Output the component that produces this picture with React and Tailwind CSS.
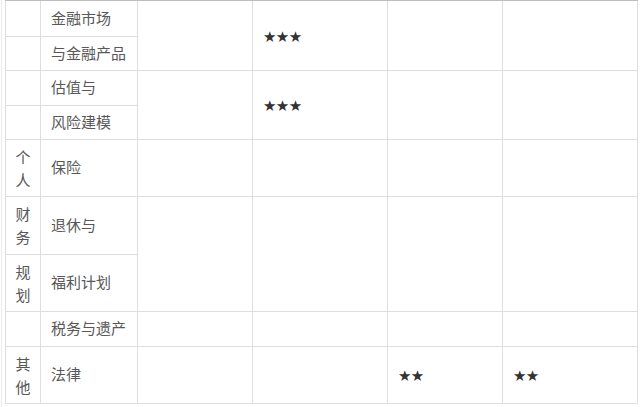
import React from "react";

const cjk = { fontFamily: '"Noto Sans CJK SC", "Liberation Sans", sans-serif' };

const Stars = ({ n }) => (
  <span
    className="text-[15px] text-[#333] tracking-[-0.6px]"
    style={{ fontFamily: '"DejaVu Sans", sans-serif' }}
  >
    {"★".repeat(n)}
  </span>
);

const Vert = ({ a, b }) => (
  <div className="flex flex-col items-center leading-[23px] text-[15px]">
    <span>{a}</span>
    <span>{b}</span>
  </div>
);

const td = "border border-[#dedede] align-middle p-0";
const label = "border border-[#dedede] align-middle pl-[10px] text-[15px]";
const star = "border border-[#dedede] align-middle pl-[10px]";

export default function App() {
  return (
    <div className="w-[644px] h-[407px] bg-white overflow-hidden relative" style={cjk}>
      <div className="absolute left-[1px] top-0 bottom-0 w-px bg-[#ececec]" />
      <div className="pl-[5px] pt-0">
        <div className="w-[633px] h-[1px] bg-[#bdbdbd]" />
        <table className="border-collapse table-fixed w-[633px] text-[#585858]">
          <colgroup>
            <col className="w-[35px]" />
            <col className="w-[97px]" />
            <col className="w-[115px]" />
            <col className="w-[135px]" />
            <col className="w-[115px]" />
            <col className="w-[135px]" />
          </colgroup>
          <tbody>
            <tr className="h-[35px]">
              <td className={td + " border-t-0"} />
              <td className={label + " border-t-0"}>金融市场</td>
              <td className={td + " border-t-0"} rowSpan={2} />
              <td className={star + " border-t-0"} rowSpan={2}><Stars n={3} /></td>
              <td className={td + " border-t-0"} rowSpan={2} />
              <td className={td + " border-t-0"} rowSpan={2} />
            </tr>
            <tr className="h-[34px]">
              <td className={td} />
              <td className={label}>与金融产品</td>
            </tr>
            <tr className="h-[35px]">
              <td className={td} />
              <td className={label}>估值与</td>
              <td className={td} rowSpan={2} />
              <td className={star} rowSpan={2}><Stars n={3} /></td>
              <td className={td} rowSpan={2} />
              <td className={td} rowSpan={2} />
            </tr>
            <tr className="h-[34px]">
              <td className={td} />
              <td className={label}>风险建模</td>
            </tr>
            <tr className="h-[57px]">
              <td className={td}><Vert a="个" b="人" /></td>
              <td className={label}>保险</td>
              <td className={td} />
              <td className={td} />
              <td className={td} />
              <td className={td} />
            </tr>
            <tr className="h-[58px]">
              <td className={td}><Vert a="财" b="务" /></td>
              <td className={label}>退休与</td>
              <td className={td} rowSpan={2} />
              <td className={td} rowSpan={2} />
              <td className={td} rowSpan={2} />
              <td className={td} rowSpan={2} />
            </tr>
            <tr className="h-[57px]">
              <td className={td}><Vert a="规" b="划" /></td>
              <td className={label}>福利计划</td>
            </tr>
            <tr className="h-[35px]">
              <td className={td} />
              <td className={label}>税务与遗产</td>
              <td className={td} />
              <td className={td} />
              <td className={td} />
              <td className={td} />
            </tr>
            <tr className="h-[57px]">
              <td className={td}><Vert a="其" b="他" /></td>
              <td className={label}>法律</td>
              <td className={td} />
              <td className={td} />
              <td className={star}><Stars n={2} /></td>
              <td className={star}><Stars n={2} /></td>
            </tr>
          </tbody>
        </table>
      </div>
    </div>
  );
}
